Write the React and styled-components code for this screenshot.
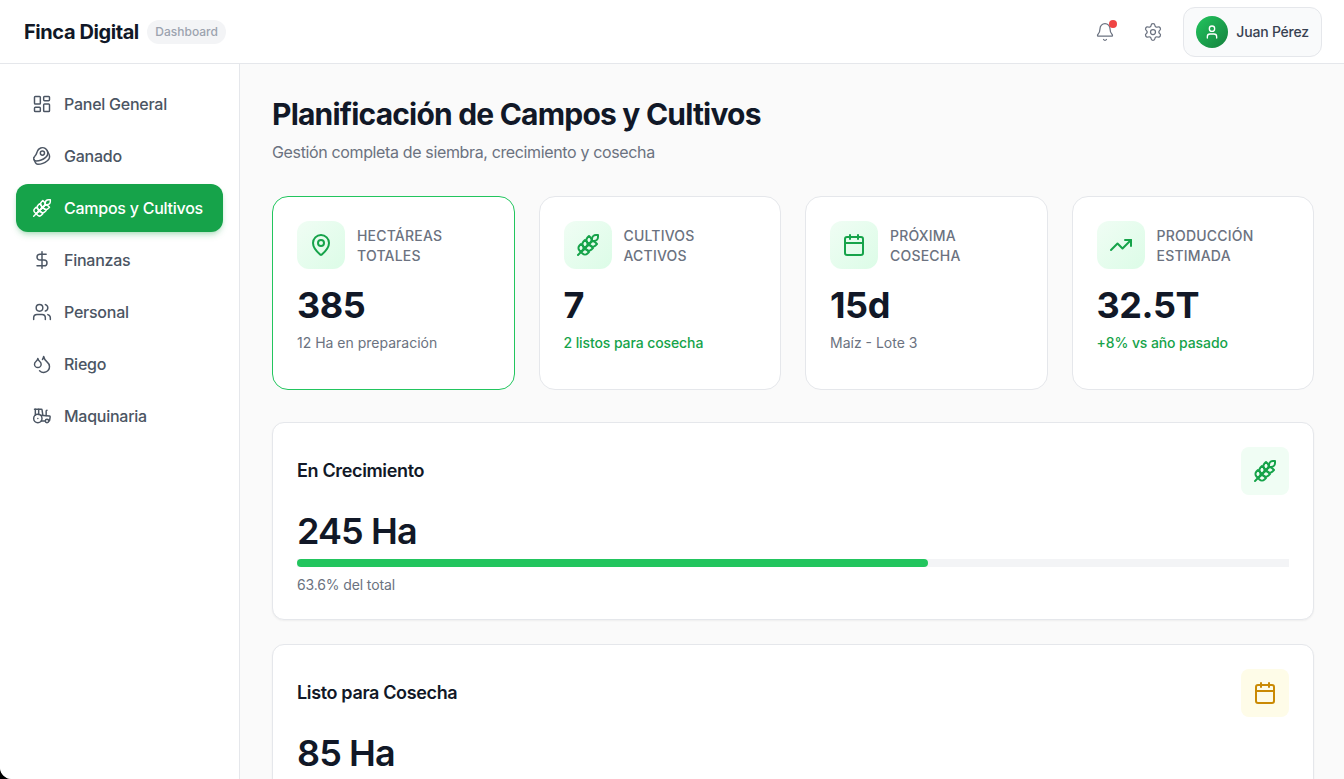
import React from 'react';
import styled, { createGlobalStyle } from 'styled-components';
import { LayoutDashboard, Beef, Wheat, DollarSign, Users, Droplets, Tractor, Bell, Settings, User, MapPin, Calendar, TrendingUp } from 'lucide-react';

const Global = createGlobalStyle`
  html, body { margin: 0; padding: 0; height: 100%; overflow: hidden; background: #000; }
  #root { height: 100%; }
  * { box-sizing: border-box; }
`;
const Shell = styled.div`
  position: relative; height: 779px; display: flex; flex-direction: column; overflow: hidden;
  background: #fafafa; font-family: Inter, "Liberation Sans", sans-serif; color: #111827;
  border-bottom-left-radius: 12px;
`;
const Header = styled.header`
  flex: 0 0 64px; height: 64px; display: flex; align-items: center; justify-content: space-between;
  padding: 0 22px 0 24px; background: #fff; border-bottom: 1px solid #e5e7eb;
`;
const Brand = styled.div`display: flex; align-items: center; gap: 8px;`;
const Logo = styled.div`font-size: 20px; font-weight: 700; letter-spacing: -0.42px; color: #111827;`;
const Badge = styled.span`
  font-size: 12px; font-weight: 500; color: #9ca3af; background: #f3f4f6; padding: 4px 8.5px; border-radius: 999px; line-height: 16px;
`;
const Actions = styled.div`display: flex; align-items: center;`;
const IconBtn = styled.button`
  position: relative; width: 40px; height: 40px; border: 0; background: none; padding: 0; margin-right: 8px;
  display: flex; align-items: center; justify-content: center; color: #6b7280;
`;
const Dot = styled.span`
  position: absolute; top: 8px; right: 8px; width: 8px; height: 8px; border-radius: 50%; background: #ef4444;
`;
const UserChip = styled.div`
  display: flex; align-items: center; gap: 8px; height: 50px; padding: 0 12px; margin-left: 2px;
  background: #f9fafb; border: 1px solid #e5e7eb; border-radius: 12px;
`;
const Avatar = styled.div`
  width: 32px; height: 32px; border-radius: 50%; display: flex; align-items: center; justify-content: center;
  color: #fff; background: linear-gradient(135deg, #22c55e, #15803d);
`;
const UserName = styled.span`font-size: 14px; font-weight: 500; color: #374151; letter-spacing: -0.2px;`;
const Body = styled.div`flex: 1; display: flex; min-height: 0;`;
const Sidebar = styled.nav`
  flex: 0 0 240px; background: #fff; border-right: 1px solid #e5e7eb; padding: 16px;
  display: flex; flex-direction: column; gap: 4px;
`;
const NavItem = styled.a`
  height: 48px; display: flex; align-items: center; gap: 12px; padding: 0 16px; border-radius: 12px;
  font-size: 16px; font-weight: 500; letter-spacing: -0.25px; white-space: nowrap;
  color: ${p => (p.$active ? '#fff' : '#4b5563')};
  background: ${p => (p.$active ? '#16a34a' : 'transparent')};
  box-shadow: ${p => (p.$active ? '0 4px 6px -1px rgba(22,163,74,.25), 0 2px 4px -2px rgba(22,163,74,.25)' : 'none')};
`;
const Main = styled.main`flex: 1; min-width: 0; padding: 32px 30px 32px 32px; overflow: hidden;`;
const Title = styled.h1`margin: 0 0 8px; font-size: 30px; line-height: 36px; font-weight: 700; letter-spacing: -0.8px; color: #111827;`;
const Subtitle = styled.p`margin: 0 0 32px; font-size: 16px; line-height: 24px; letter-spacing: -0.36px; color: #6b7280;`;
const Stats = styled.div`display: grid; grid-template-columns: repeat(4, 1fr); gap: 24px; margin-bottom: 32px;`;
const StatCard = styled.div`
  height: 194px; padding: 24px; background: #fff; border-radius: 16px;
  border: 1px solid ${p => (p.$active ? '#22c55e' : '#e5e7eb')};
`;
const StatHead = styled.div`display: flex; align-items: center; gap: 12px; margin-bottom: 16px;`;
const StatIcon = styled.div`
  flex: none; width: 48px; height: 48px; border-radius: 12px; display: flex; align-items: center; justify-content: center;
  color: #16a34a; background: linear-gradient(135deg, #f0fdf4, #dcfce7);
`;
const StatLabel = styled.div`font-size: 14px; line-height: 20px; font-weight: 500; letter-spacing: 0.2px; text-transform: uppercase; color: #6b7280; padding-top: 1px;`;
const StatValue = styled.div`font-size: 36px; line-height: 40px; font-weight: 700; color: #111827; margin-bottom: 8px; letter-spacing: -0.4px;`;
const StatNote = styled.div`font-size: 14px; line-height: 20px; font-weight: ${p => (p.$good ? 500 : 400)}; letter-spacing: ${p => (p.$good ? '-0.1px' : '0')}; color: ${p => (p.$good ? '#16a34a' : '#6b7280')};`;
const Panel = styled.section`
  background: #fff; border: 1px solid #e5e7eb; border-radius: 12px; padding: 24px; margin-bottom: 24px;
  box-shadow: 0 1px 2px rgba(0,0,0,.05);
`;
const PanelHead = styled.div`display: flex; align-items: center; justify-content: space-between; margin-bottom: 16px;`;
const PanelTitle = styled.h3`margin: 0; font-size: 18px; line-height: 28px; font-weight: 600; letter-spacing: -0.35px; color: #111827;`;
const PanelIcon = styled.div`
  width: 48px; height: 48px; border-radius: 8px; display: flex; align-items: center; justify-content: center;
  color: ${p => p.$color}; background: ${p => p.$bg};
`;
const PanelValue = styled.div`font-size: 36px; line-height: 40px; font-weight: 600; letter-spacing: -0.9px; color: #111827; margin-bottom: 8px;`;
const Track = styled.div`height: 8px; background: #f3f4f6; margin-bottom: 8px;`;
const Fill = styled.div`height: 100%; background: #22c55e; border-radius: 999px;`;
const PanelNote = styled.div`font-size: 14px; line-height: 20px; letter-spacing: -0.13px; color: #6b7280;`;

const nav = [
  [LayoutDashboard, 'Panel General'], [Beef, 'Ganado'], [Wheat, 'Campos y Cultivos', true], [DollarSign, 'Finanzas'],
  [Users, 'Personal'], [Droplets, 'Riego'], [Tractor, 'Maquinaria'],
];
const stats = [
  [MapPin, ['Hectáreas', 'Totales'], '385', '12 Ha en preparación', false, true],
  [Wheat, ['Cultivos', 'Activos'], '7', '2 listos para cosecha', true],
  [Calendar, ['Próxima', 'Cosecha'], '15d', 'Maíz - Lote 3', false],
  [TrendingUp, ['Producción', 'Estimada'], '32.5T', '+8% vs año pasado', true],
];

export default function App() {
  return (
    <Shell>
      <Global />
      <Header>
        <Brand><Logo>Finca Digital</Logo><Badge>Dashboard</Badge></Brand>
        <Actions>
          <IconBtn><Bell size={20} strokeWidth={1.5} /><Dot /></IconBtn>
          <IconBtn><Settings size={20} strokeWidth={1.5} /></IconBtn>
          <UserChip><Avatar><User size={16} /></Avatar><UserName>Juan Pérez</UserName></UserChip>
        </Actions>
      </Header>
      <Body>
        <Sidebar>
          {nav.map(([I, t, a]) => <NavItem key={t} $active={a}><I size={20} strokeWidth={1.75} />{t}</NavItem>)}
        </Sidebar>
        <Main>
          <Title>Planificación de Campos y Cultivos</Title>
          <Subtitle>Gestión completa de siembra, crecimiento y cosecha</Subtitle>
          <Stats>
            {stats.map(([I, l, v, n, g, a]) => (
              <StatCard key={v} $active={a}>
                <StatHead>
                  <StatIcon><I size={24} /></StatIcon>
                  <StatLabel>{l[0]}<br />{l[1]}</StatLabel>
                </StatHead>
                <StatValue>{v}</StatValue>
                <StatNote $good={g}>{n}</StatNote>
              </StatCard>
            ))}
          </Stats>
          <Panel>
            <PanelHead>
              <PanelTitle>En Crecimiento</PanelTitle>
              <PanelIcon $color="#16a34a" $bg="#f0fdf4"><Wheat size={24} /></PanelIcon>
            </PanelHead>
            <PanelValue>245 Ha</PanelValue>
            <Track><Fill style={{ width: '63.6%' }} /></Track>
            <PanelNote>63.6% del total</PanelNote>
          </Panel>
          <Panel>
            <PanelHead>
              <PanelTitle>Listo para Cosecha</PanelTitle>
              <PanelIcon $color="#ca8a04" $bg="#fefce8"><Calendar size={24} /></PanelIcon>
            </PanelHead>
            <PanelValue>85 Ha</PanelValue>
          </Panel>
        </Main>
      </Body>
    </Shell>
  );
}
